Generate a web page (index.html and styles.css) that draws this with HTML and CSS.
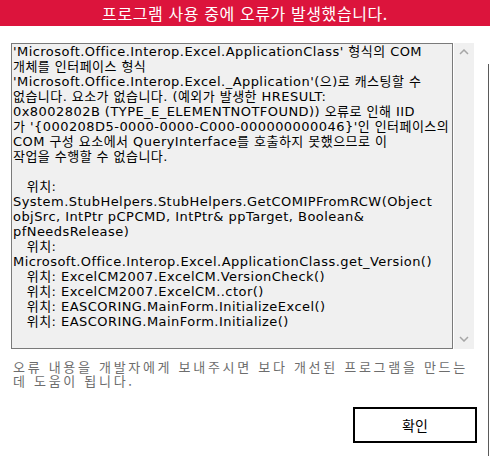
FILE: index.html
```html
<!DOCTYPE html>
<html lang="ko">
<head>
    <meta charset="UTF-8">
    <title>오류</title>
    <link rel="stylesheet" href="styles.css">
</head>
<body>
    <header class="title-bar">프로그램 사용 중에 오류가 발생했습니다.</header>

    <main class="content">
        <div class="log-row">
            <div class="log-box">'Microsoft.Office.Interop.Excel.ApplicationClass' 형식의 COM
개체를 인터페이스 형식
'Microsoft.Office.Interop.Excel._Application'(으)로 캐스팅할 수
없습니다. 요소가 없습니다. (예외가 발생한 HRESULT:
0x8002802B (TYPE_E_ELEMENTNOTFOUND)) 오류로 인해 IID
가 '{000208D5-0000-0000-C000-000000000046}'인 인터페이스의
COM 구성 요소에서 QueryInterface를 호출하지 못했으므로 이
작업을 수행할 수 없습니다.

   위치:
System.StubHelpers.StubHelpers.GetCOMIPFromRCW(Object
objSrc, IntPtr pCPCMD, IntPtr&amp; ppTarget, Boolean&amp;
pfNeedsRelease)
   위치:
Microsoft.Office.Interop.Excel.ApplicationClass.get_Version()
   위치: ExcelCM2007.ExcelCM.VersionCheck()
   위치: ExcelCM2007.ExcelCM..ctor()
   위치: EASCORING.MainForm.InitializeExcel()
   위치: EASCORING.MainForm.Initialize()</div>
            <div class="scrollbar">
                <svg width="10" height="6" viewBox="0 0 10 6"><polyline points="1,5 5,1 9,5" fill="none" stroke="#a6a6a6" stroke-width="1.5"/></svg>
                <svg width="10" height="6" viewBox="0 0 10 6"><polyline points="1,1 5,5 9,1" fill="none" stroke="#a6a6a6" stroke-width="1.5"/></svg>
            </div>
        </div>

        <p class="notice">오류 내용을 개발자에게 보내주시면 보다 개선된 프로그램을 만드는<br>데 도움이 됩니다.</p>

        <div class="actions">
            <button type="button" class="ok-btn">확인</button>
        </div>
    </main>
</body>
</html>
```

FILE: styles.css
```css
body {
    margin: 0;
    padding: 0;
    background-color: #fff;
    /* edge of the window behind */
    background-image: linear-gradient(#5a5a5a, #5a5a5a);
    background-repeat: no-repeat;
    background-position: 488px 64px;
    background-size: 1px 100%;
    font-family: "DejaVu Sans", "Noto Sans CJK KR", sans-serif;
    color: #000;
    height: 456px;
    overflow: hidden;
}

.title-bar {
    height: 26px;
    line-height: 26px;
    background-color: #dc143c;
    color: #fff;
    text-align: center;
    font-family: "Noto Sans CJK KR", sans-serif;
    font-size: 16px;
    letter-spacing: 0.6px;
}

.content {
    padding: 17px 0 0 11px;
}

.log-row {
    display: flex;
    height: 306px;
}

.log-box {
    box-sizing: border-box;
    width: 442px;
    height: 306px;
    border: 1px solid #7a7a7a;
    background-color: #f0f0f0;
    padding: 0 0 0 1px;
    white-space: pre;
    overflow: hidden;
    font-size: 13px;
    line-height: 15px;
    letter-spacing: 0.45px;
}

.scrollbar {
    width: 20px;
    margin-left: 1px;
    background-color: #f0f0f0;
    display: flex;
    flex-direction: column;
    justify-content: space-between;
    align-items: center;
    padding: 6px 0 7px;
    box-sizing: border-box;
}

.notice {
    margin: 11px 0 0 2px;
    color: #6d6d6d;
    font-family: "Noto Sans CJK KR", sans-serif;
    font-size: 13px;
    line-height: 14px;
    letter-spacing: 2.7px;
}

.actions {
    display: flex;
    justify-content: flex-end;
    padding-right: 13px;
    margin-top: 19px;
}

.ok-btn {
    width: 124px;
    height: 36px;
    background-color: #fff;
    border: 2px solid #000;
    font-family: "Noto Sans CJK KR", sans-serif;
    font-size: 14px;
    color: #000;
    padding: 0;
}
```
